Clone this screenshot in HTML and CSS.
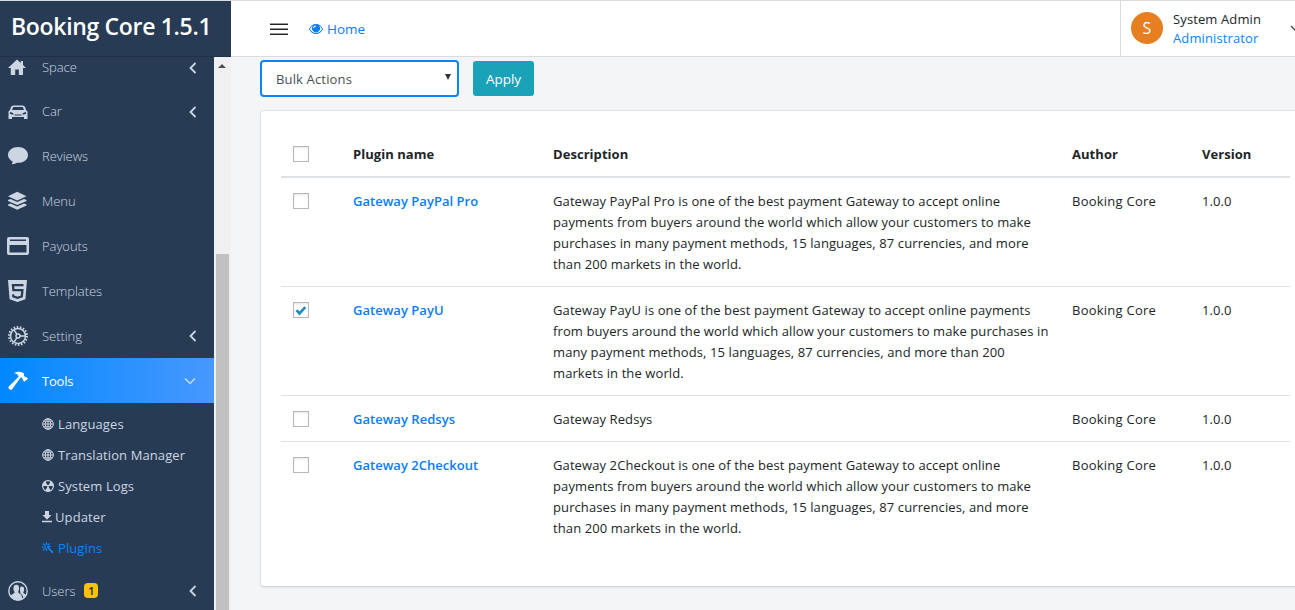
FILE: index.html
```html
<!DOCTYPE html>
<html lang="en">
<head>
<meta charset="utf-8">
<title>Booking Core - Plugins</title>
<link rel="stylesheet" href="styles.css">
</head>
<body>
<div class="app">
<header class="header">
  <div class="logo"><span>Booking Core 1.5.1</span></div>
  <div class="bar">
    <div class="burger"><i></i><i></i><i></i></div>
    <a class="home"><svg width="14" height="10" viewBox="0 0 14 10"><path fill="currentColor" fill-rule="evenodd" d="M7 0C3.9 0 1.400 2 0 5c1.400 3 3.900 5 7 5s5.600-2 7-5C12.600 2 10.100 0 7 0zM1 5C1.800 3.500 2.700 2.500 3.900 1.800a4 4 0 1 0 6.200 0C11.300 2.500 12.200 3.500 13 5 11.700 7.600 9.600 9.100 7 9.100S2.300 7.600 1 5zM7 1.500v.9A2 2 0 0 0 5 4.300h-.8A2.800 2.800 0 0 1 7 1.500z"/></svg><span>Home</span></a>
    <div class="user">
      <div class="avatar">S</div>
      <div class="who"><span class="name">System Admin</span><span class="role">Administrator</span></div>
      <svg class="more" width="10" height="7" viewBox="0 0 10 7"><path d="M1 1l4 4 4-4" fill="none" stroke="#444" stroke-width="1.300"/></svg>
    </div>
  </div>
</header>
<div class="body">
<nav class="side">
  <ul class="menu">
    <li class="item first"><svg class="ic" viewBox="0 0 20 20"><path d="M9 1.500L0 10h2.800v7h4.400v-5.500h3.600V17H15v-7h3L15 7V3h-2.300v2z"/></svg><span>Space</span><svg class="ar" viewBox="0 0 8 12"><path d="M6.500 1L1.500 6l5 5"/></svg></li>
    <li class="item car"><svg class="ic" viewBox="0 0 20 20"><path fill-rule="evenodd" d="M5 3.500h10l2 1.200L18 8l1.500 1.500V17H16v-2H4v2H.5V9.500L2 8l1-3.300zM5.200 5L4 8h12l-1.200-3zM2 10v2l3.500.8c.5-1-1-2.600-3.500-2.800zm16 0c-2.500.2-4 1.800-3.500 2.800L18 12zM6.500 12.500v1h7v-1z"/></svg><span>Car</span><svg class="ar" viewBox="0 0 8 12"><path d="M6.500 1L1.500 6l5 5"/></svg></li>
    <li class="item"><svg class="ic" viewBox="0 0 20 20"><path d="M10 1C4.500 1 0 4.500 0 9c0 2.600 1.700 4.900 4.600 6.400.2 1.200-.4 2-1.200 2.700 2.300.2 4.300-.5 5.600-1.300C15.500 17.300 20 13.700 20 9s-4.500-8-10-8z"/></svg><span>Reviews</span></li>
    <li class="item"><svg class="ic" viewBox="0 0 20 20"><path d="M9.200.8L18.500 5.200 9.200 9.500 0 5.200zM0 9l2.500-.9 6.700 3L16 8.100l2.500.9v1L9.200 14 0 10zM0 13.400l2.500-1 6.700 3 6.800-3 2.500 1v1.100l-9.300 4.200L0 14.500z"/></svg><span>Menu</span></li>
    <li class="item"><svg class="ic card-ic" viewBox="0 0 22 18"><path fill-rule="evenodd" d="M2 0h18a2 2 0 0 1 2 2v14a2 2 0 0 1-2 2H2a2 2 0 0 1-2-2V2a2 2 0 0 1 2-2zm1 2.500v1.500h16V2.500zM2.500 8v7.500h17V8z"/></svg><span>Payouts</span></li>
    <li class="item"><svg class="ic html-ic" viewBox="0 0 19 22"><path d="M0 0h19l-1.600 19.300L9.500 22l-7.900-2.700z"/><path d="M15.500 5.200H5l.4 5h9l-.6 6.300-4.300 1.400-4.200-1.400-.2-2.200" fill="none" stroke="#283b54" stroke-width="2.300"/></svg><span>Templates</span></li>
    <li class="item"><svg class="ic gear" viewBox="0 0 20 20"><circle cx="10" cy="10" r="9" class="teeth"/><circle cx="10" cy="10" r="7.500"/><circle cx="10" cy="10" r="2"/><path d="M8.800 8.200L6 3.800M8.800 11.800L6 16.200M12 10h5.500"/></svg><span>Setting</span><svg class="ar" viewBox="0 0 8 12"><path d="M6.500 1L1.500 6l5 5"/></svg></li>
    <li class="item active"><svg class="ic" viewBox="0 0 20 20"><path d="M6 2.300C8 .4 12 .1 15 1.800l1 .8-.2 1.600 1.600 2 1-.3L20 7.800l-3.700 3-1.500-1.600.2-1-2-2.200L4.100 18.300c-.7.800-1.700.9-2.400.3L.8 17.500c-.7-.8-.4-1.700.3-2.300L10.800 5.500C10 3.500 8.600 2.500 6 2.300z"/></svg><span>Tools</span><svg class="ar down" viewBox="0 0 12 8"><path d="M1 1.500l5 5 5-5"/></svg></li>
    <li class="sub">
      <a class="lang"><svg class="globe" viewBox="0 0 12 12"><circle cx="6" cy="6" r="5.300"/><ellipse cx="6" cy="6" rx="2.700" ry="5.300"/><path d="M6 .5v11M.5 6h11M1.500 3.200h9M1.500 8.800h9"/></svg><span>Languages</span></a>
      <a class="trans"><svg class="globe" viewBox="0 0 12 12"><circle cx="6" cy="6" r="5.300"/><ellipse cx="6" cy="6" rx="2.700" ry="5.300"/><path d="M6 .5v11M.5 6h11M1.500 3.200h9M1.500 8.800h9"/></svg><span>Translation Manager</span></a>
      <a class="logs"><svg class="nuke" viewBox="0 0 12 12"><circle cx="6" cy="6" r="5.400" fill="none" stroke="currentColor" stroke-width="1.200"/><path d="M6 6L3.200 1.200a5.500 5.500 0 0 0-2.700 4.900zM6 6l2.800-4.800a5.500 5.500 0 0 1 2.700 4.900zM6 6l-2.800 4.800a5.500 5.500 0 0 0 5.600 0z"/><circle cx="6" cy="6" r="1"/></svg><span>System Logs</span></a>
      <a class="upd"><svg viewBox="0 0 10 12"><path d="M3 0h4v4h2.500L5 8.800.5 4H3zM0 9.800h10v1.400H0z"/></svg><span>Updater</span></a>
      <a class="plug"><svg viewBox="0 0 12 12"><path d="M4.700 5.200l1.200-1.200 5.600 6.300-1.200 1.200z"/><path d="M4.500 0v3M1 1.500l2.500 2M0 5h4M1 8.300l2.500-2M4.500 6.500V9M8 1.500L5.500 3.500M6 4.500h3" fill="none" stroke="currentColor" stroke-width="1.100"/></svg><span>Plugins</span></a>
    </li>
    <li class="item users"><svg class="ic" viewBox="0 0 20 20"><circle cx="10" cy="10" r="9.200" fill="none" stroke="#cbd6e2" stroke-width="1.400"/><path d="M8.300 3.800c2 0 3 1.400 2.800 3.600-.1 1.600-.8 2.600-1 3.400 0 1.600 2.500 1.900 3.400 3.200l.8 4.500-4.300.8c-3.200 0-6-1.500-7.700-4.300.8-1.700 4.300-2.200 4.300-4-.5-.8-1.200-1.800-1.200-3.500 0-2.300 1-3.700 2.900-3.700zM13.800 5.500c1.700 0 2.500 1.200 2.400 3-.1 1.300-.7 2.200-.9 3 .2 1.200 1.800 1.600 2.700 2.400l-2.500 3.400-1.300-3.600-2-1.500c.2-1 .4-1.300-.2-2.300.2-2.600-.3-4.300 1.800-4.400z"/></svg><span>Users</span><b class="badge">1</b><svg class="ar" viewBox="0 0 8 12"><path d="M6.500 1L1.500 6l5 5"/></svg></li>
  </ul>
</nav>
<div class="scroll"><div class="up"></div><div class="thumb"></div></div>
<main class="main">
  <div class="filters">
    <div class="select"><span>Bulk Actions</span><i></i></div>
    <button class="apply">Apply</button>
  </div>
  <section class="panel">
    <table>
      <colgroup><col class="c1"><col class="c2"><col class="c3"><col class="c4"><col class="c5"></colgroup>
      <thead><tr><th><i class="box"></i></th><th>Plugin name</th><th>Description</th><th>Author</th><th>Version</th></tr></thead>
      <tbody>
        <tr><td><i class="box"></i></td><td class="pn">Gateway PayPal Pro</td><td>Gateway PayPal Pro is one of the best payment Gateway to accept online<br>payments from buyers around the world which allow your customers to make<br>purchases in many payment methods, 15 languages, 87 currencies, and more<br>than 200 markets in the world.</td><td class="au">Booking Core</td><td>1.0.0</td></tr>
        <tr><td><i class="box"><svg viewBox="0 0 14 14"><path d="M2.500 7.200l3 3.300 5.800-6.300" fill="none" stroke="#1e8cbe" stroke-width="2.700"/></svg></i></td><td class="pn">Gateway PayU</td><td>Gateway PayU is one of the best payment Gateway to accept online payments<br>from buyers around the world which allow your customers to make purchases in<br>many payment methods, 15 languages, 87 currencies, and more than 200<br>markets in the world.</td><td class="au">Booking Core</td><td>1.0.0</td></tr>
        <tr><td><i class="box"></i></td><td class="pn">Gateway Redsys</td><td>Gateway Redsys</td><td class="au">Booking Core</td><td>1.0.0</td></tr>
        <tr><td><i class="box"></i></td><td class="pn">Gateway 2Checkout</td><td>Gateway 2Checkout is one of the best payment Gateway to accept online<br>payments from buyers around the world which allow your customers to make<br>purchases in many payment methods, 15 languages, 87 currencies, and more<br>than 200 markets in the world.</td><td class="au">Booking Core</td><td>1.0.0</td></tr>
      </tbody>
    </table>
  </section>
</main>
</div>
</div>
</body>
</html>
```
FILE: styles.css
```css
* { box-sizing: border-box; }
body { margin: 0; font-family: "Open Sans", "Noto Sans", sans-serif; font-size: 13px; line-height: 21px; color: #212529; background: #f4f5f7; overflow: hidden; }
ul { list-style: none; margin: 0; padding: 0; }
svg { display: block; flex: none; }
span { white-space: nowrap; }
.app { width: 1295px; height: 610px; overflow: hidden; display: flex; flex-direction: column; border-top: 1px solid #d9dbe0; }
.header { display: flex; height: 56px; flex: none; }
.logo { width: 231px; background: #283b54; border-bottom: 1px solid #20304a; color: #fff; font-size: 23px; font-weight: 600; line-height: 51px; padding-left: 11px; letter-spacing: -.32px; }
.bar { flex: 1; display: flex; align-items: center; background: #fff; border-bottom: 1px solid #d9dbde; padding-left: 39px; overflow: hidden; }
.burger { width: 18px; display: flex; flex-direction: column; gap: 3px; margin-top: 1px; }
.burger i { height: 2px; background: linear-gradient(#999 50%, #222 50%); }
.home { display: flex; align-items: center; margin-left: 22px; gap: 4px; color: #0a7cf5; font-size: 13.500px; margin-left: 21px; margin-top: 1px; }
.user { margin-left: auto; width: 175px; height: 55px; border-left: 1px solid #d9dbe0; display: flex; align-items: center; padding-left: 10px; }
.avatar { width: 32px; height: 32px; border-radius: 50%; background: #e67e22; color: #fff; text-align: center; font-size: 16px; line-height: 33px; flex: none; margin-bottom: 1px; }
.who { display: flex; flex-direction: column; margin-left: 10px; line-height: 19px; width: 118px; flex: none; letter-spacing: .12px; }
.role { color: #0a84ff; }
.more { margin-left: -1px; }
.body { display: flex; height: 553px; }
.side { width: 214px; background: #283b54; overflow: hidden; }
.menu { margin-top: -13px; }
.item { display: flex; align-items: center; height: 45px; padding: 0 17px 0 8px; color: #cbd6e2; font-weight: 300; }
.item span { padding-top: 2px; letter-spacing: -.05px; }
.item.first span, .item.car span { padding-top: 0; margin-top: -1px; }
.item.first { padding-top: 3px; }
.item.car { height: 44px; padding-top: 2px; }
.item.first .ic, .item.car .ic { margin-left: -.5px; margin-right: 14.500px; }
.ic { width: 20px; height: 20px; margin-right: 14px; fill: #cbd6e2; }
.card-ic { width: 22px; height: 18px; margin-right: 12px; margin-left: -1px; margin-right: 13px; }
.html-ic { width: 19px; height: 22px; margin-right: 15px; }
.gear { fill: none; stroke: #cbd6e2; stroke-width: 1.500; }
.gear .teeth { stroke-width: 2; stroke-dasharray: 1.570 1.570; }
.ar { width: 8px; height: 12px; margin-left: auto; fill: none; stroke: #cbd6e2; stroke-width: 1.800; }
.ar.down { width: 12px; height: 8px; stroke-width: 1.500; margin-right: 1px; }
.active { color: #fff; background: linear-gradient(90deg, #0088ff, #4898ff); }
.active span { font-weight: 400; letter-spacing: -.2px; }
.active .ic { fill: #fff; }
.sub { padding: 6px 0 4px 42px; height: 165px; }
.sub a { display: flex; align-items: center; height: 31px; color: #cbd6e2; gap: 4px; }
.sub svg { width: 12px; height: 12px; fill: currentColor; margin-top: -1px; }
.sub span { letter-spacing: .1px; }
.sub .globe { fill: none; stroke: currentColor; stroke-width: 1; }
.sub .upd { gap: 3px; }
.sub .upd svg { width: 10px; }
.sub .plug { color: #0a84ff; }
.badge { background: #ffc107; color: #212529; font-size: 11px; width: 14px; height: 15px; line-height: 15px; text-align: center; border-radius: 4px; margin-left: 9px; font-weight: 600; }
.scroll { width: 17px; background: #f0f0f0; padding: 7px 2px 0; }
.up { width: 0; height: 4px; border: solid transparent; border-width: 0 4px 4px; border-bottom-color: #505050; margin-left: 2px; }
.thumb { margin-top: 186px; height: 360px; background: #c1c1c1; }
.main { flex: 1; padding: 3px 0 0 29px; min-width: 0; }
.filters { display: flex; align-items: center; gap: 14px; height: 37px; }
.select { width: 199px; height: 37px; border: 2px solid #0a84ff; border-radius: 4px; background: #fff; color: #495057; display: flex; align-items: center; justify-content: space-between; padding: 0 6px 0 14px; letter-spacing: .15px; }
.select span { padding-top: 2px; }
.select i { border: solid transparent; border-width: 6px 3.500px 0; border-top-color: #333; margin-top: -3px; }
.apply { width: 61px; height: 35px; border: 0; border-radius: 3px; background: #1aa3b8; color: #fff; font: 500 13.500px "Open Sans", sans-serif; padding: 0; }
.panel { width: 1055px; height: 477px; margin-top: 13px; background: #fff; border: 1px solid #e1e3e7; border-bottom-color: #d5d7db; border-radius: 4px; padding: 20px; box-shadow: 0 1px 2px rgba(0,0,0,.08); }
table { width: 1009px; table-layout: fixed; border-collapse: separate; border-spacing: 0; }
.c1 { width: 60px; } .c2 { width: 200px; } .c3 { width: 519px; } .c4 { width: 130px; } .c5 { width: 100px; }
th, td { text-align: left; vertical-align: top; padding: 13px 0 11px 12px; white-space: nowrap; }
td { letter-spacing: .1px; }
th { border-bottom: 2px solid #dee2e6; font-weight: 700; letter-spacing: .05px; }
tbody tr + tr td { border-top: 1px solid #dee2e6; }
td.pn { color: #0a7cf5; font-weight: 600; letter-spacing: .03px; }
td.au { letter-spacing: .24px; }
.box { display: block; width: 16px; height: 16px; margin: 2px 0 0; border: 1px solid #b4b9be; background: #fff; box-shadow: inset 0 1px 2px rgba(0,0,0,.1); }
```
